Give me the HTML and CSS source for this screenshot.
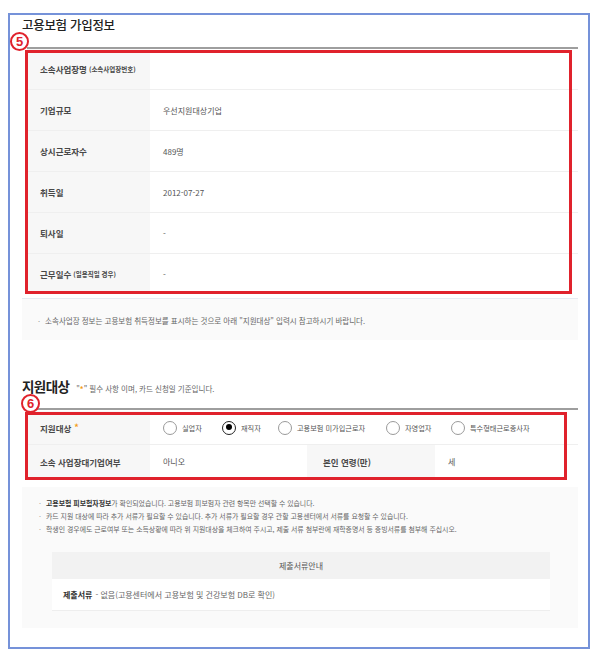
FILE: index.html
```html
<!DOCTYPE html>
<html lang="ko">
<head>
<meta charset="utf-8">
<title>고용보험 가입정보</title>
<link rel="stylesheet" href="styles.css">
</head>
<body>
<div class="frame">
  <span class="badge badge5">5</span>
  <span class="badge badge6">6</span>

  <section class="sec">
    <div class="head">
      <h2 class="title">고용보험 가입정보</h2>
    </div>
    <div class="tbl-wrap">
      <div class="info-table">
        <div class="row"><div class="th">소속사업장명 <small>(소속사업장번호)</small></div><div class="td"></div></div>
        <div class="row"><div class="th">기업규모</div><div class="td">우선지원대상기업</div></div>
        <div class="row"><div class="th">상시근로자수</div><div class="td">489명</div></div>
        <div class="row"><div class="th">취득일</div><div class="td">2012-07-27</div></div>
        <div class="row"><div class="th">퇴사일</div><div class="td">-</div></div>
        <div class="row last"><div class="th">근무일수<small>(일용직일 경우)</small></div><div class="td">-</div></div>
      </div>
      <div class="mark mark1"></div>
    </div>
    <div class="note"><span class="dot">·</span>소속사업장 정보는 고용보험 취득정보를 표시하는 것으로 아래 "지원대상" 입력시 참고하시기 바랍니다.</div>
  </section>

  <section class="sec">
    <div class="head head2">
      <h2 class="title title2">지원대상</h2>
      <span class="sub">"<em>*</em>" 필수 사항 이며, 카드 신청일 기준입니다.</span>
    </div>
    <div class="tbl-wrap">
      <div class="grid-table">
        <div class="th row-a">지원대상 <em class="req">*</em></div>
        <div class="td radios row-a">
          <label class="radio r1"><span class="circle"></span>실업자</label>
          <label class="radio r2"><span class="circle on"></span>재직자</label>
          <label class="radio r3"><span class="circle"></span>고용보험 미가입근로자</label>
          <label class="radio r4"><span class="circle"></span>자영업자</label>
          <label class="radio r5"><span class="circle"></span>특수형태근로종사자</label>
        </div>
        <div class="th row-b">소속 사업장대기업여부</div>
        <div class="td row-b">아니오</div>
        <div class="th th2 row-b">본인 연령(만)</div>
        <div class="td row-b">세</div>
      </div>
      <div class="mark mark2"></div>
    </div>
    <div class="guide">
      <ul class="bullets">
        <li><b>고용보험 피보험자정보</b>가 확인되었습니다. 고용보험 피보험자 관련 항목만 선택할 수 있습니다.</li>
        <li>카드 지원 대상에 따라 추가 서류가 필요할 수 있습니다. 추가 서류가 필요할 경우 관할 고용센터에서 서류를 요청할 수 있습니다.</li>
        <li>학생인 경우에도 근로여부 또는 소득상황에 따라 위 지원대상을 체크하여 주시고, 제출 서류 첨부란에 재학증명서 등 증빙서류를 첨부해 주십시오.</li>
      </ul>
      <div class="docs">
        <div class="docs-head">제출서류안내</div>
        <div class="docs-row"><b>제출서류</b> - 없음(고용센터에서 고용보험 및 건강보험 DB로 확인)</div>
      </div>
    </div>
  </section>
</div>
</body>
</html>
```

FILE: styles.css
```css
* { box-sizing: border-box; }
html, body { margin: 0; padding: 0; background: #fff; }
body {
  font-family: "Noto Sans CJK KR", "Noto Sans", sans-serif;
  color: #333;
  width: 600px;
  height: 659px;
  overflow: hidden;
}
.frame {
  position: relative;
  margin: 13px 0 0 8px;
  width: 582px;
  height: 636px;
  border: 2px solid #7592d9;
}
.sec { margin: 0 10px 0 17px; }
.head {
  border-bottom: 2px solid #9e9e9e;
  padding: 2px 0 14px;
  display: flex;
  align-items: baseline;
}
.title {
  margin: 0 0 0 -5px;
  font-size: 12.5px;
  line-height: 16px;
  font-weight: 500;
  color: #222;
  letter-spacing: -0.3px;
}
.head2 { margin-top: 30px; padding: 8px 0 14px; }
.title2 { font-weight: 700; font-size: 13.5px; letter-spacing: -0.6px; }
.sub { font-size: 7.5px; color: #666; margin-left: 7px; }
.sub em { font-style: normal; color: #f39c1a; font-weight: 700; }

.tbl-wrap { position: relative; }
.row {
  display: flex;
  height: 41px;
  border-bottom: 1px solid #efefef;
}
.row.last { border-bottom: 0; height: 40px; }
.th {
  width: 123px;
  background: #f7f7f7;
  display: flex;
  align-items: center;
  padding-left: 13px;
  font-size: 8.5px;
  font-weight: 700;
  color: #484848;
  white-space: nowrap;
}
.th small { font-size: 6.5px; font-weight: 700; margin-left: 2px; }
.td {
  flex: 1;
  display: flex;
  align-items: center;
  padding-left: 13px;
  font-size: 8px;
  color: #555;
}
.mark {
  position: absolute;
  border: 3px solid #e0222c;
  pointer-events: none;
}
.mark1 { left: -2px; top: 1px; width: 547px; height: 244px; }
.mark2 { left: -2px; top: 1px; width: 542px; height: 68px; }

.note {
  margin: 4px 0 0 -5px;
  height: 42px;
  background: #fafafa;
  border-top: 1px solid #e6ebf2;
  padding: 15px 0 0 16px;
  font-size: 7.5px;
  line-height: 13px;
  color: #666;
}
.note .dot { margin-right: 5px; color: #999; }

.grid-table {
  display: grid;
  grid-template-columns: 123px 157px 128px 1fr;
  grid-template-rows: 34px 33px;
  margin-top: 1px;
}
.grid-table .row-a { border-bottom: 1px solid #efefef; }
.grid-table .th { width: auto; }
.grid-table .th2 { padding-left: 16px; }
.radios { grid-column: 2 / 5; gap: 0; }
.req { font-style: normal; color: #f39c1a; margin-left: 3px; font-size: 9px; }
.radio {
  display: flex;
  align-items: center;
  font-size: 7.2px;
  color: #555;
  white-space: nowrap;
}
.r1 { width: 59px; }
.r2 { width: 56px; }
.r3 { width: 108px; }
.r4 { width: 65px; }
.circle {
  width: 14px;
  height: 14px;
  border-radius: 50%;
  border: 1px solid #9a9a9a;
  background: #fff;
  margin-right: 5px;
  flex: none;
  position: relative;
}
.circle.on { border: 1.5px solid #222; }
.circle.on::after {
  content: "";
  position: absolute;
  left: 2.5px; top: 2.5px;
  width: 6px; height: 6px;
  border-radius: 50%;
  background: #000;
}

.guide {
  margin: 9px 0 0 -5px;
  height: 141px;
  background: #fafafa;
  padding: 10px 0 0 0;
}
.bullets {
  list-style: none;
  margin: 0;
  padding: 0 0 0 24px;
  font-size: 6.9px;
  line-height: 13px;
  color: #666;
}
.bullets li { position: relative; }
.bullets li::before {
  content: "·";
  position: absolute;
  left: -7px;
  color: #999;
}
.bullets b { color: #333; font-weight: 700; }
.docs { margin: 16px 28px 0 30px; }
.docs-head {
  height: 27px;
  background: #f2f2f2;
  display: flex;
  align-items: center;
  justify-content: center;
  font-size: 8px;
  color: #555;
}
.docs-row {
  height: 32px;
  background: #fff;
  border-bottom: 1px solid #eee;
  display: flex;
  align-items: center;
  padding-left: 11px;
  font-size: 8px;
  color: #666;
}
.docs-row b { color: #333; margin-right: 3px; }

.badge {
  position: absolute;
  width: 19px;
  height: 19px;
  border: 2px solid #e0222c;
  border-radius: 50%;
  background: #fff;
  color: #e0222c;
  font-family: "Liberation Sans", Arial, sans-serif;
  font-weight: 700;
  font-size: 13px;
  line-height: 15px;
  text-align: center;
  z-index: 2;
}
.badge5 { left: 0; top: 17px; }
.badge6 { left: 11px; top: 379px; }
```
